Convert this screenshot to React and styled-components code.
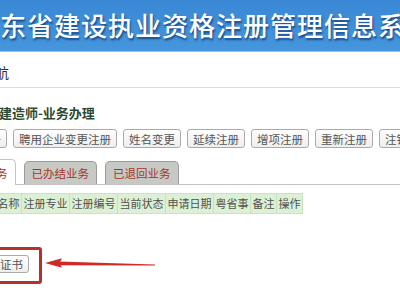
import React from 'react';
import styled, { createGlobalStyle } from 'styled-components';

const GlobalStyle = createGlobalStyle`
  html, body {
    margin: 0;
    padding: 0;
    background: #ffffff;
    overflow: hidden;
  }
  body {
    font-family: "Noto Sans CJK SC", "Noto Sans", sans-serif;
    color: #444;
  }
`;

const actions = ['初始注册', '聘用企业变更注册', '姓名变更', '延续注册', '增项注册', '重新注册', '注销注册'];
const tabs = [
  { label: '办理中业务', active: true },
  { label: '已办结业务' },
  { label: '已退回业务' },
];
const columns = ['企业名称', '注册专业', '注册编号', '当前状态', '申请日期', '粤省事', '备注', '操作'];

export default function App() {
  return (
    <>
      <GlobalStyle />
      <Page>
        <Header>
          <Title>广东省建设执业资格注册管理信息系统</Title>
        </Header>
        <NavBar>
          <NavText>导航</NavText>
        </NavBar>
        <Main>
          <SectionTitle>一级建造师-业务办理</SectionTitle>
          <ActionRow>
            {actions.map(label => (
              <ActionButton key={label}>{label}</ActionButton>
            ))}
          </ActionRow>
          <TabBar>
            {tabs.map(tab => (
              <Tab key={tab.label} active={tab.active}>
                {tab.label}
              </Tab>
            ))}
          </TabBar>
          <HeaderRow>
            {columns.map(col => (
              <HeaderCell key={col}>{col}</HeaderCell>
            ))}
          </HeaderRow>
          <CallOutRow>
            <RedBox>
              <ActionButton small>打印证书</ActionButton>
            </RedBox>
            <Arrow viewBox="0 0 112 12" width="112" height="12">
              <polygon points="0,6 17,1.2 14.5,6 17,10.8" fill="#cf2a25" />
              <polygon points="14,4.4 110,7.5 110,8.5 14,8.2" fill="#cf2a25" />
            </Arrow>
          </CallOutRow>
        </Main>
      </Page>
    </>
  );
}

const Page = styled.div`
  width: 400px;
  height: 300px;
  overflow: hidden;
`;

const Header = styled.div`
  display: flex;
  align-items: center;
  height: 49px;
  padding-bottom: 2px;
  background: linear-gradient(#3a88d5, #4596dc);
  border-bottom: 1px solid #8ec3ee;
  overflow: hidden;
`;

const Title = styled.div`
  margin-left: -27px;
  white-space: nowrap;
  font-size: 26px;
  font-weight: 500;
  letter-spacing: 1px;
  color: #ffffff;
  text-shadow: 1px 2px 2px rgba(10, 50, 110, 0.75);
`;

const NavBar = styled.div`
  display: flex;
  align-items: center;
  height: 30px;
  padding-top: 5px;
  border-bottom: 1px solid #dcdcdc;
`;

const NavText = styled.div`
  margin-left: -19px;
  font-size: 14px;
  color: #333;
`;

const Main = styled.div`
  display: flex;
  flex-direction: column;
  align-items: flex-start;
`;

const SectionTitle = styled.div`
  margin: 17px 0 0 -27px;
  line-height: 16px;
  font-size: 13px;
  font-weight: 700;
  color: #2f4a30;
  white-space: nowrap;
`;

const ActionRow = styled.div`
  display: flex;
  gap: 6px;
  margin: 8px 0 0 -51px;
  white-space: nowrap;
`;

const ActionButton = styled.div`
  display: flex;
  align-items: center;
  height: ${props => (props.small ? '16px' : '17px')};
  padding: 0 5px;
  font-size: 11.5px;
  color: #555;
  background: linear-gradient(#ffffff, #eeeeee);
  border: 1px solid #aaaaaa;
  border-radius: 3px;
  white-space: nowrap;
`;

const TabBar = styled.div`
  display: flex;
  align-items: flex-end;
  gap: 8px;
  align-self: stretch;
  margin: 11px 0 0 -58px;
  height: 25px;
  border-bottom: 1px solid #c4c4c4;
`;

const Tab = styled.div`
  display: flex;
  align-items: center;
  padding: 0 7px;
  height: ${props => (props.active ? '25px' : '22px')};
  margin-bottom: ${props => (props.active ? '-1px' : '0')};
  font-size: 11.5px;
  color: ${props => (props.active ? '#a33a2e' : '#a8332d')};
  background: ${props => (props.active ? '#ffffff' : '#c7cac4')};
  border: 1px solid ${props => (props.active ? '#c4c4c4' : '#9a9d97')};
  border-bottom: ${props => (props.active ? 'none' : '0')};
  border-radius: 5px 5px 0 0;
  white-space: nowrap;
`;

const HeaderRow = styled.div`
  display: flex;
  margin: 8px 0 0 -26px;
  background: #dcf0d5;
  border-top: 1px solid #c9e4c1;
  border-bottom: 1px solid #c9e4c1;
`;

const HeaderCell = styled.div`
  padding: 0 1.5px;
  height: 19px;
  line-height: 19px;
  font-size: 11px;
  color: #505050;
  border-right: 1px solid #c6e2be;
  white-space: nowrap;
`;

const CallOutRow = styled.div`
  display: flex;
  align-items: flex-start;
  margin: 33px 0 0 -42px;
`;

const RedBox = styled.div`
  display: flex;
  padding: 5px 10px 8px 10px;
  border: 3px solid #b5322c;
  border-radius: 3px;
`;

const Arrow = styled.svg`
  display: block;
  margin: 10px 0 0 3px;
`;
